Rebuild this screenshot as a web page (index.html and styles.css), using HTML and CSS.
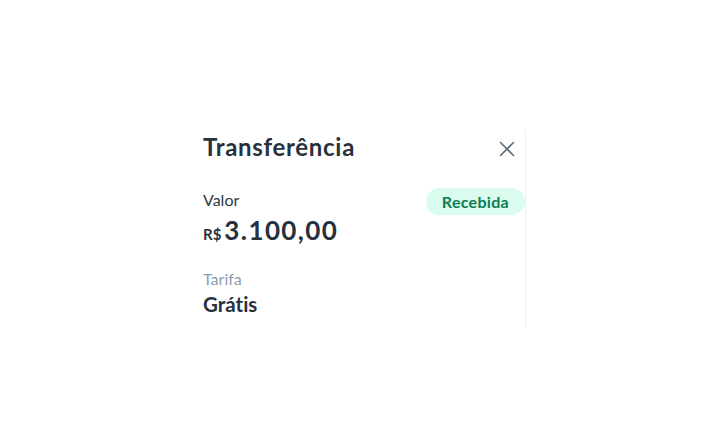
FILE: index.html
```html
<!DOCTYPE html>
<html lang="pt-BR">
<head>
<meta charset="utf-8">
<link rel="stylesheet" href="styles.css">
</head>
<body>
<div class="panel">
  <div class="header">
    <h1 class="title">Transferência</h1>
    <button class="close" aria-label="Fechar">
      <svg width="16" height="16" viewBox="0 0 16 16"><path d="M1.5 1.5 L14.5 14.5 M14.5 1.5 L1.5 14.5" stroke="#5f6b78" stroke-width="1.6" fill="none" stroke-linecap="round"/></svg>
    </button>
  </div>
  <div class="row">
    <div class="field">
      <div class="label">Valor</div>
      <div class="amount"><span class="currency">R$</span><span class="value">3.100,00</span></div>
    </div>
    <span class="badge">Recebida</span>
  </div>
  <div class="field fee">
    <div class="label muted">Tarifa</div>
    <div class="fee-value">Grátis</div>
  </div>
</div>
</body>
</html>
```
FILE: styles.css
```css
html, body {
  margin: 0;
  padding: 0;
  background: #ffffff;
}
body {
  font-family: Lato, "Noto Sans", sans-serif;
  color: #27323d;
  font-variant-ligatures: none;
}
.panel {
  margin: 130px 0 0 203px;
  width: 323px;
  height: 198px;
  border-right: 1px solid #eceef0;
  box-sizing: border-box;
}
.header {
  display: flex;
  justify-content: space-between;
  align-items: flex-start;
  padding-top: 2px;
  padding-right: 10px;
}
.title {
  margin: 0;
  font-size: 24px;
  line-height: 30px;
  font-weight: 700;
  color: #27323d;
  letter-spacing: 0.7px;
}
.close {
  border: 0;
  background: none;
  padding: 0;
  margin-top: 9px;
  width: 16px;
  height: 16px;
  display: flex;
}
.row {
  display: flex;
  justify-content: space-between;
  align-items: flex-start;
  margin-top: 28px;
}
.label {
  font-size: 16px;
  line-height: 20px;
  color: #2d3a45;
}
.label.muted {
  color: #8d9db0;
}
.amount {
  display: flex;
  align-items: baseline;
  margin-top: 5px;
}
.currency {
  font-size: 15px;
  font-weight: 700;
  margin-right: 3px;
}
.value {
  font-size: 26px;
  line-height: 30px;
  font-weight: 700;
  letter-spacing: 1.4px;
}
.badge {
  margin-top: -2px;
  margin-right: 0;
  background: #d9fcef;
  color: #0b7d53;
  font-weight: 700;
  font-size: 16px;
  line-height: 27px;
  padding: 0 16px;
  letter-spacing: 0.3px;
  border-radius: 14px;
}
.fee {
  margin-top: 24px;
}
.fee-value {
  font-size: 20.5px;
  line-height: 24px;
  font-weight: 700;
  margin-top: 3px;
}
```
